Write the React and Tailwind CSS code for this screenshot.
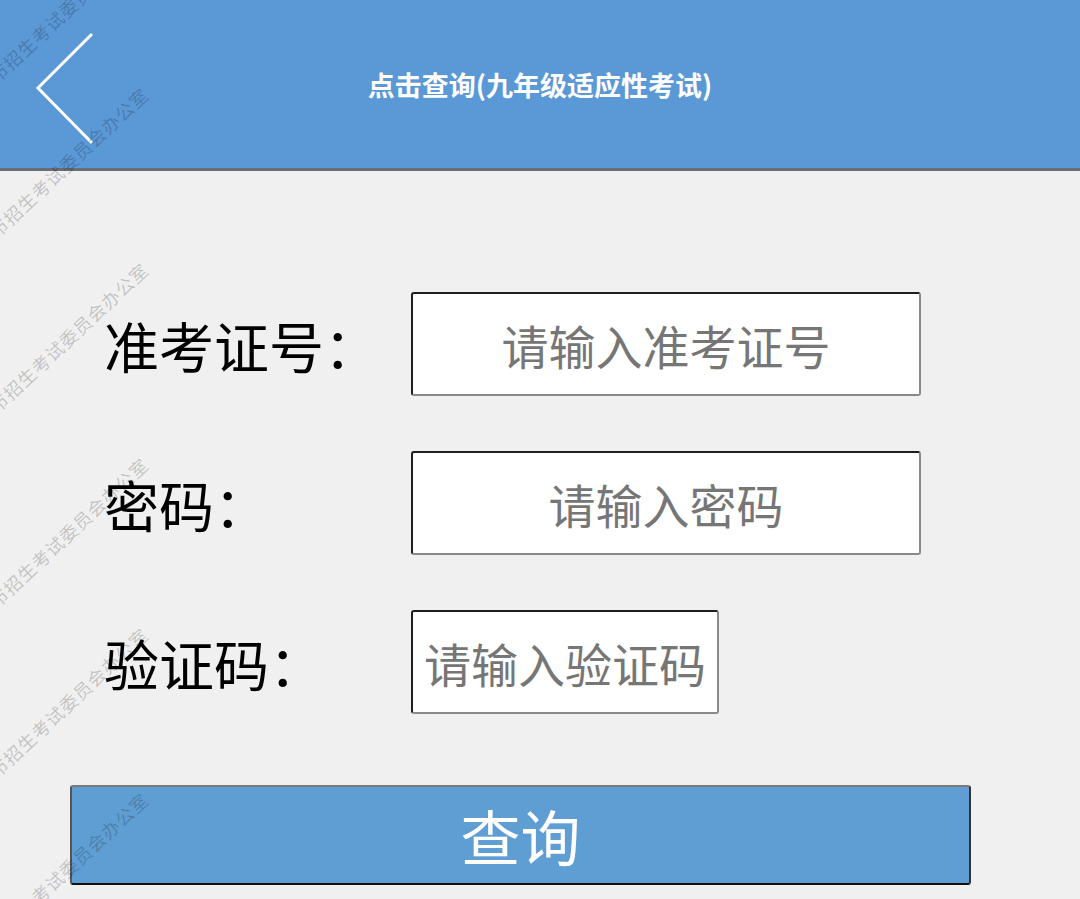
const marks = [85, 240, 415, 610, 780, 945];

function Watermark({ y }) {
  return (
    <span
      className="absolute -left-[2px] whitespace-nowrap text-[18px] leading-none tracking-[1px] text-black/20 origin-bottom-left -rotate-[43deg]"
      style={{ top: y - 18 }}
    >
      市招生考试委员会办公室
    </span>
  );
}

function Field({ label, placeholder, width }) {
  return (
    <div className="flex items-center pl-[104px]">
      <div className="w-[307px] text-[55px] leading-none text-black">{label}</div>
      <input
        placeholder={placeholder}
        className={`${width} h-[104px] bg-white rounded-[3px] border-2 border-t-[#1e1e1e] border-l-[#1e1e1e] border-r-[#8a8a8a] border-b-[#8a8a8a] text-center text-[47px] outline-none placeholder:text-[#767676]`}
      />
    </div>
  );
}

export default function App() {
  return (
    <div className="relative min-h-[899px] w-full overflow-hidden bg-[#f0f0f0] font-['Noto_Sans_CJK_SC','Noto_Sans',sans-serif]">
      <header className="flex h-[171px] items-center bg-[#5b98d6] border-b-[3px] border-[#686e75]">
        <div className="w-[130px] shrink-0">
          <svg className="ml-[35px] mt-[10px]" width="60" height="114" viewBox="0 0 60 114">
            <polyline points="57,2 3,56 57,111" fill="none" stroke="#fff" strokeWidth="3" />
          </svg>
        </div>
        <h1 className="flex-1 pt-[2px] text-center text-[27px] font-bold text-white">
          点击查询(九年级适应性考试)
        </h1>
        <div className="w-[130px] shrink-0" />
      </header>

      <main className="flex flex-col pt-[121px]">
        <Field label="准考证号：" placeholder="请输入准考证号" width="w-[510px]" />
        <div className="h-[55px]" />
        <Field label="密码：" placeholder="请输入密码" width="w-[510px]" />
        <div className="h-[55px]" />
        <Field label="验证码：" placeholder="请输入验证码" width="w-[308px]" />
        <button className="ml-[70px] mt-[71px] h-[100px] w-[901px] rounded-[3px] bg-[#5f9ed3] border-2 border-t-[#7a7a7a] border-l-[#555] border-r-[#333] border-b-[#111] text-[60px] leading-none text-white">
          查询
        </button>
      </main>

      <div className="pointer-events-none absolute inset-0">
        {marks.map((y) => (
          <Watermark key={y} y={y} />
        ))}
      </div>
    </div>
  );
}
